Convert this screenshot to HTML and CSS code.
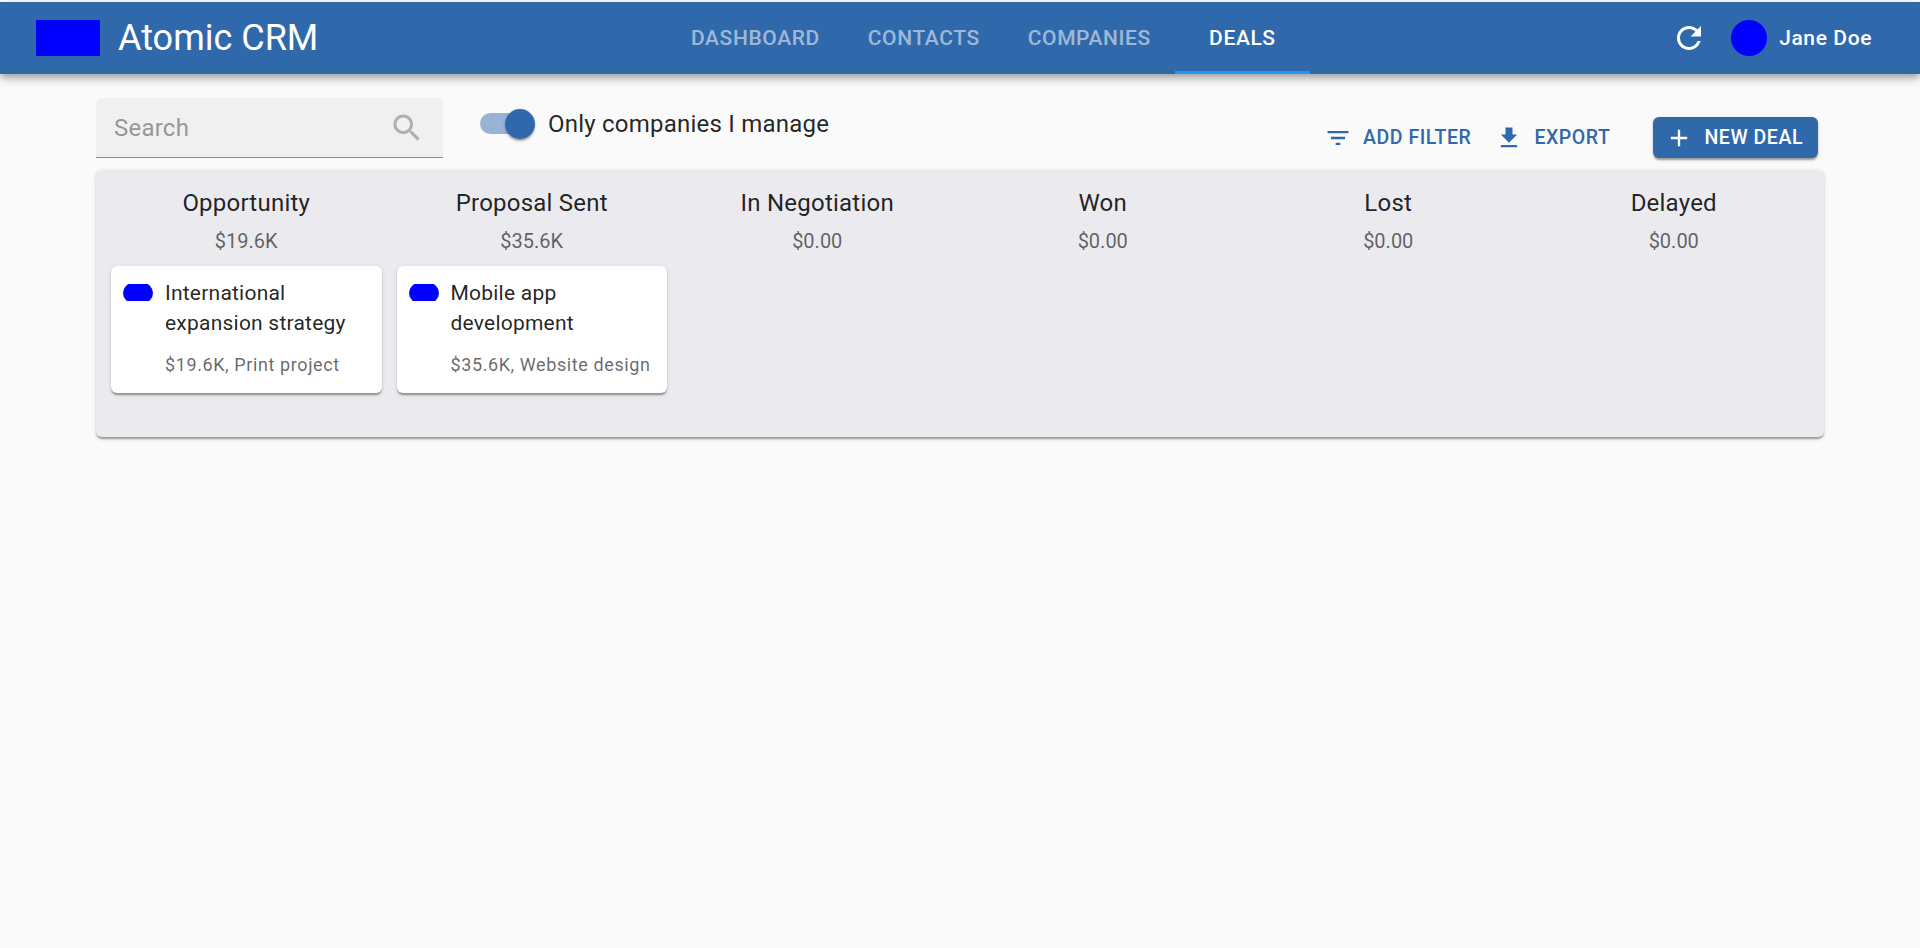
FILE: index.html
```html
<!DOCTYPE html>
<html lang="en">
<head>
    <meta charset="UTF-8">
    <meta name="viewport" content="width=device-width, initial-scale=1.0">
    <title>Atomic CRM</title>
    <link rel="stylesheet" href="styles.css">
</head>
<body>
    <header class="app-bar">
        <div class="brand">
            <div class="brand-logo"></div>
            <span class="brand-name">Atomic CRM</span>
        </div>
        <nav class="tabs">
            <a class="tab" href="#">Dashboard</a>
            <a class="tab" href="#">Contacts</a>
            <a class="tab" href="#">Companies</a>
            <a class="tab tab-active" href="#">Deals</a>
        </nav>
        <div class="user-area">
            <svg class="refresh-icon" viewBox="0 0 24 24"><path d="M17.65 6.35C16.2 4.9 14.21 4 12 4c-4.42 0-7.99 3.58-7.99 8s3.57 8 7.99 8c3.73 0 6.84-2.55 7.73-6h-2.08c-.82 2.33-3.04 4-5.65 4-3.31 0-6-2.69-6-6s2.69-6 6-6c1.66 0 3.14.69 4.22 1.78L13 11h7V4l-2.35 2.35z"/></svg>
            <div class="avatar"></div>
            <span class="user-name">Jane Doe</span>
        </div>
    </header>

    <main class="content">
        <div class="toolbar">
            <div class="filters">
                <div class="search-box">
                    <span class="search-label">Search</span>
                    <svg class="search-icon" viewBox="0 0 24 24"><path d="M15.5 14h-.79l-.28-.27C15.41 12.59 16 11.11 16 9.5 16 5.91 13.09 3 9.5 3S3 5.91 3 9.5 5.91 16 9.5 16c1.61 0 3.09-.59 4.23-1.57l.27.28v.79l5 4.99L20.49 19l-4.99-5zm-6 0C7.01 14 5 11.99 5 9.5S7.01 5 9.5 5 14 7.01 14 9.5 11.99 14 9.5 14z"/></svg>
                </div>
                <label class="switch-row">
                    <span class="switch"><span class="switch-thumb"></span></span>
                    <span class="switch-label">Only companies I manage</span>
                </label>
            </div>
            <div class="actions">
                <button class="text-btn">
                    <svg class="btn-icon" viewBox="0 0 24 24"><path d="M10 18h4v-2h-4v2zM3 6v2h18V6H3zm3 7h12v-2H6v2z"/></svg>
                    Add filter
                </button>
                <button class="text-btn">
                    <svg class="btn-icon" viewBox="0 0 24 24"><path d="M19 9h-4V3H9v6H5l7 7 7-7zM5 18v2h14v-2H5z"/></svg>
                    Export
                </button>
                <button class="new-btn">
                    <svg class="btn-icon" viewBox="0 0 24 24"><path d="M19 13h-6v6h-2v-6H5v-2h6V5h2v6h6v2z"/></svg>
                    New deal
                </button>
            </div>
        </div>

        <section class="board">
            <div class="column">
                <h2 class="column-title">Opportunity</h2>
                <p class="column-total">$19.6K</p>
                <div class="deal-card">
                    <div class="deal-logo"><div class="deal-logo-img"></div></div>
                    <div class="deal-body">
                        <p class="deal-name">International expansion strategy</p>
                        <p class="deal-meta">$19.6K, Print project</p>
                    </div>
                </div>
            </div>
            <div class="column">
                <h2 class="column-title">Proposal Sent</h2>
                <p class="column-total">$35.6K</p>
                <div class="deal-card">
                    <div class="deal-logo"><div class="deal-logo-img"></div></div>
                    <div class="deal-body">
                        <p class="deal-name">Mobile app development</p>
                        <p class="deal-meta">$35.6K, Website design</p>
                    </div>
                </div>
            </div>
            <div class="column">
                <h2 class="column-title">In Negotiation</h2>
                <p class="column-total">$0.00</p>
            </div>
            <div class="column">
                <h2 class="column-title">Won</h2>
                <p class="column-total">$0.00</p>
            </div>
            <div class="column">
                <h2 class="column-title">Lost</h2>
                <p class="column-total">$0.00</p>
            </div>
            <div class="column">
                <h2 class="column-title">Delayed</h2>
                <p class="column-total">$0.00</p>
            </div>
        </section>
    </main>
</body>
</html>
```

FILE: styles.css
```css
* {
    box-sizing: border-box;
}
html, body {
    height: 100%;
}
body {
    margin: 0;
    padding-top: 2px;
    overflow: hidden;
    background: #fafafa;
    color: rgba(0, 0, 0, 0.87);
    font-family: Roboto, "Liberation Sans", sans-serif;
    background-image: linear-gradient(#fff 2px, transparent 2px);
}
p, h2 {
    margin: 0;
    font-weight: 400;
}

/* top bar */
.app-bar {
    display: grid;
    grid-template-columns: 631px auto 1fr;
    align-items: center;
    height: 72px;
    padding: 0 36px;
    background: #3069ab;
    color: #fff;
    box-shadow: 0 3px 6px -1px rgba(0,0,0,0.2), 0 6px 8px 0 rgba(0,0,0,0.14), 0 1.5px 15px 0 rgba(0,0,0,0.12);
    position: relative;
}
.brand {
    display: flex;
    align-items: center;
    gap: 18px;
}
.brand-logo {
    width: 64px;
    height: 36px;
    background: #00f;
}
.brand-name {
    font-size: 36px;
    line-height: 1;
}
.tabs {
    display: flex;
    height: 72px;
}
.tab {
    display: flex;
    align-items: center;
    justify-content: center;
    min-width: 135px;
    padding: 0 24px;
    font-size: 21px;
    font-weight: 500;
    letter-spacing: 0.02857em;
    text-transform: uppercase;
    text-decoration: none;
    color: rgba(255, 255, 255, 0.55);
}
.tab-active {
    color: #fff;
    border-bottom: 3px solid #2196f3;
    padding-top: 3px;
}
.user-area {
    display: flex;
    align-items: center;
    justify-content: flex-end;
}
.refresh-icon {
    width: 36px;
    height: 36px;
    fill: #fff;
    margin-right: 24px;
}
.avatar {
    width: 36px;
    height: 36px;
    border-radius: 50%;
    background: #00f;
    margin-right: 12px;
}
.user-name {
    font-size: 21px;
    font-weight: 500;
    letter-spacing: 0.02857em;
    margin-right: 12px;
}

/* filters + buttons */
.content {
    padding: 0 96px;
}
.toolbar {
    display: flex;
    justify-content: space-between;
    height: 96px;
    padding-top: 24px;
}
.filters {
    display: flex;
    align-items: flex-start;
}
.search-box {
    display: flex;
    align-items: center;
    justify-content: space-between;
    width: 347px;
    height: 60px;
    padding: 1px 18px 0;
    background: #f0f0f0;
    border-bottom: 1px solid #8c8c8c;
    border-radius: 6px 6px 0 0;
}
.search-label {
    font-size: 24px;
    letter-spacing: 0.00938em;
    color: rgba(0, 0, 0, 0.4);
}
.search-icon {
    width: 36px;
    height: 36px;
    fill: rgba(0, 0, 0, 0.27);
}
.switch-row {
    display: flex;
    align-items: center;
    height: 51px;
    margin-left: 37px;
}
.switch {
    position: relative;
    display: block;
    width: 51px;
    height: 21px;
    border-radius: 11px;
    background: #97b4d6;
}
.switch-thumb {
    position: absolute;
    top: -4px;
    right: -4px;
    width: 30px;
    height: 30px;
    border-radius: 50%;
    background: #3069ab;
    box-shadow: 0 3px 2px -1px rgba(0,0,0,0.2), 0 1.5px 1.5px 0 rgba(0,0,0,0.14), 0 1.5px 4px 0 rgba(0,0,0,0.12);
}
.switch-label {
    margin-left: 17px;
    font-size: 24px;
    letter-spacing: 0.00938em;
}
.actions {
    display: flex;
    align-items: center;
    height: 41px;
    margin-top: 19px;
    margin-right: 6px;
}
button {
    display: flex;
    align-items: center;
    border: 0;
    background: none;
    font-family: inherit;
    font-size: 19.5px;
    font-weight: 500;
    letter-spacing: 0.02857em;
    text-transform: uppercase;
}
.text-btn {
    color: #3069ab;
    padding: 0;
    margin-right: 24px;
}
.text-btn + .text-btn {
    margin-right: 43px;
}
.new-btn {
    height: 41px;
    padding: 0 15px 0 12px;
    border-radius: 6px;
    background: #3069ab;
    color: #fff;
    box-shadow: 0 3px 2px -1px rgba(0,0,0,0.2), 0 1.5px 1.5px 0 rgba(0,0,0,0.14), 0 1.5px 4px 0 rgba(0,0,0,0.12);
}
.btn-icon {
    width: 28px;
    height: 28px;
    margin-right: 11px;
    fill: currentColor;
}

/* board */
.board {
    display: flex;
    height: 267px;
    padding: 0 7.5px;
    background: #eaeaef;
    border-radius: 6px;
    box-shadow: 0 3px 2px -1px rgba(0,0,0,0.2), 0 1.5px 1.5px 0 rgba(0,0,0,0.14), 0 1.5px 4px 0 rgba(0,0,0,0.12);
}
.column {
    flex: 1 1 0;
    min-width: 0;
    padding: 17px 7.5px 0;
}
.column-title {
    font-size: 24px;
    line-height: 32px;
    letter-spacing: 0.00938em;
    text-align: center;
}
.column-total {
    margin-top: 7px;
    font-size: 20px;
    line-height: 30px;
    color: rgba(0, 0, 0, 0.6);
    text-align: center;
}
.deal-card {
    display: flex;
    height: 127px;
    margin-top: 10px;
    padding: 18px 12px 0;
    background: #fff;
    border-radius: 6px;
    box-shadow: 0 3px 2px -1px rgba(0,0,0,0.2), 0 1.5px 1.5px 0 rgba(0,0,0,0.14), 0 1.5px 4px 0 rgba(0,0,0,0.12);
}
.deal-logo {
    flex: none;
    display: flex;
    align-items: center;
    width: 30px;
    height: 17px;
    overflow: hidden;
}
.deal-logo-img {
    width: 30px;
    height: 20px;
    flex: none;
    border-radius: 10px;
    background: #00f;
}
.deal-body {
    margin-left: 12px;
    margin-top: -6px;
    min-width: 0;
}
.deal-name {
    font-size: 21px;
    line-height: 30px;
    letter-spacing: 0.01071em;
}
.deal-meta {
    margin-top: 13px;
    font-size: 18px;
    line-height: 27px;
    letter-spacing: 0.03333em;
    white-space: nowrap;
    color: rgba(0, 0, 0, 0.6);
}
```
